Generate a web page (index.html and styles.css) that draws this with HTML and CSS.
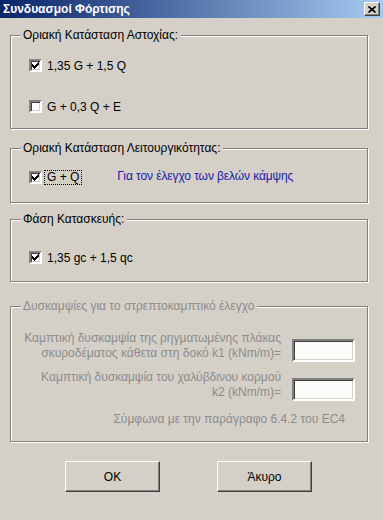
FILE: index.html
```html
<!DOCTYPE html>
<html lang="el">
<head>
    <meta charset="UTF-8">
    <title>Συνδυασμοί Φόρτισης</title>
    <link rel="stylesheet" href="styles.css">
</head>
<body>
    <div class="window">
        <div class="titlebar">
            <span class="title">Συνδυασμοί Φόρτισης</span>
            <span class="close-btn">
                <svg width="8" height="7" viewBox="0 0 8 7"><path d="M0.5 0.5 L7.5 6.5 M7.5 0.5 L0.5 6.5" stroke="#000" stroke-width="1.6"/></svg>
            </span>
        </div>

        <div class="content">
            <div class="group group-uls">
                <span class="legend">Οριακή Κατάσταση Αστοχίας:</span>
                <div class="check-row">
                    <span class="checkbox"><svg class="tick" width="7" height="7" viewBox="0 0 7 7"><path d="M0 2h1v1h1v1h1v-1h1v-1h1v-1h1v-1h1v3h-1v1h-1v1h-1v1h-1v1h-1v-1h-1v-1h-1z" fill="#000"/></svg></span>
                    <span class="check-label">1,35 G + 1,5 Q</span>
                </div>
                <div class="check-row second">
                    <span class="checkbox"></span>
                    <span class="check-label">G + 0,3 Q + E</span>
                </div>
            </div>

            <div class="group group-sls">
                <span class="legend">Οριακή Κατάσταση Λειτουργικότητας:</span>
                <div class="check-row">
                    <span class="checkbox"><svg class="tick" width="7" height="7" viewBox="0 0 7 7"><path d="M0 2h1v1h1v1h1v-1h1v-1h1v-1h1v-1h1v3h-1v1h-1v1h-1v1h-1v1h-1v-1h-1v-1h-1z" fill="#000"/></svg></span>
                    <span class="check-label focused">G + Q</span>
                    <span class="note">Για τον έλεγχο των βελών κάμψης</span>
                </div>
            </div>

            <div class="group group-const">
                <span class="legend">Φάση Κατασκευής:</span>
                <div class="check-row">
                    <span class="checkbox"><svg class="tick" width="7" height="7" viewBox="0 0 7 7"><path d="M0 2h1v1h1v1h1v-1h1v-1h1v-1h1v-1h1v3h-1v1h-1v1h-1v1h-1v1h-1v-1h-1v-1h-1z" fill="#000"/></svg></span>
                    <span class="check-label">1,35 gc + 1,5 qc</span>
                </div>
            </div>

            <div class="group group-stiff disabled">
                <span class="legend">Δυσκαμψίες για το στρεπτοκαμπτικό έλεγχο</span>
                <div class="field-row">
                    <label class="field-label">Καμπτική δυσκαμψία της ρηγματωμένης πλάκας<br>σκυροδέματος κάθετα στη δοκό k1 (kNm/m)=</label>
                    <input type="text" class="field-input" disabled>
                </div>
                <div class="field-row">
                    <label class="field-label">Καμπτική δυσκαμψία του χαλύβδινου κορμού<br>k2 (kNm/m)=</label>
                    <input type="text" class="field-input" disabled>
                </div>
                <div class="ref-note">Σύμφωνα με την παράγραφο 6.4.2 του EC4</div>
            </div>

            <div class="buttons">
                <button type="button" class="btn">OK</button>
                <button type="button" class="btn">Άκυρο</button>
            </div>
        </div>
    </div>
</body>
</html>
```

FILE: styles.css
```css
body {
    margin: 0;
    background-color: #d4d0c8;
    font-family: "Liberation Sans", Arial, sans-serif;
    font-size: 12px;
    color: #000;
}
.window {
    width: 383px;
    height: 520px;
    background-color: #d4d0c8;
    overflow: hidden;
}
.titlebar {
    height: 18px;
    display: flex;
    align-items: center;
    justify-content: space-between;
    padding: 0 3px 0 3px;
    background: linear-gradient(to right, #0a246a, #a6caf0);
}
.title {
    color: #fff;
    font-weight: bold;
    font-size: 12px;
}
.close-btn {
    width: 14px;
    height: 12px;
    display: flex;
    align-items: center;
    justify-content: center;
    background-color: #d4d0c8;
    border: 1px solid;
    border-color: #fff #404040 #404040 #fff;
    box-shadow: inset -1px -1px 0 #808080;
}
.content {
    padding: 17px 15px 0 10px;
}
.group {
    position: relative;
    box-sizing: border-box;
    border: 1px solid #808080;
    box-shadow: 1px 1px 0 #fff, inset 1px 1px 0 #fff;
    padding-left: 18px;
}
.legend {
    position: absolute;
    top: -8px;
    left: 10px;
    padding: 0 3px 0 2px;
    line-height: 15px;
    background-color: #d4d0c8;
}
.group-uls {
    height: 94px;
    padding-top: 22px;
}
.group-sls {
    height: 55px;
    margin-top: 19px;
    padding-top: 21px;
}
.group-const {
    height: 63px;
    margin-top: 16px;
    padding-top: 30px;
}
.group-stiff {
    height: 136px;
    margin-top: 24px;
    padding: 32px 12px 0 10px;
}
.check-row {
    display: flex;
    align-items: center;
    height: 15px;
}
.check-row.second {
    margin-top: 26px;
}
.checkbox {
    width: 9px;
    height: 9px;
    flex: none;
    display: flex;
    align-items: center;
    justify-content: center;
    background-color: #fff;
    border: 2px solid;
    border-color: #808080 #fff #fff #808080;
    box-shadow: inset 1px 1px 0 #404040, inset -1px -1px 0 #d4d0c8;
}
.tick {
    display: block;
}
.check-label {
    margin-left: 5px;
    white-space: nowrap;
}
.check-label.focused {
    margin-left: 2px;
    padding: 0 2px 0 2px;
    border: 1px dotted #000;
    line-height: 13px;
}
.note {
    margin-left: 35px;
    margin-top: -3px;
    letter-spacing: -0.1px;
    color: #1a1aa8;
}
.disabled .legend,
.disabled .field-label,
.disabled .ref-note {
    color: #8c8c8c;
}
.field-row {
    display: flex;
    align-items: flex-start;
    justify-content: flex-end;
    gap: 11px;
    height: 39px;
}
.field-label {
    text-align: right;
    line-height: 15px;
    margin-top: -8px;
}
.field-input {
    width: 63px;
    height: 23px;
    box-sizing: border-box;
    margin: 0;
    padding: 0;
    background-color: #fcfcfa;
    border: 2px solid;
    border-color: #808080 #fff #fff #808080;
    box-shadow: inset 1px 1px 0 #404040, inset -1px -1px 0 #d4d0c8;
}
.ref-note {
    text-align: right;
    padding-right: 10px;
    margin-top: -5px;
}
.buttons {
    display: flex;
    gap: 57px;
    padding: 19px 0 0 55px;
}
.btn {
    width: 95px;
    height: 31px;
    font-family: "Liberation Sans", Arial, sans-serif;
    font-size: 12px;
    color: #000;
    background-color: #d4d0c8;
    border: 1px solid;
    border-color: #fff #404040 #404040 #fff;
    box-shadow: inset -1px -1px 0 #808080;
    padding: 0;
}
```
